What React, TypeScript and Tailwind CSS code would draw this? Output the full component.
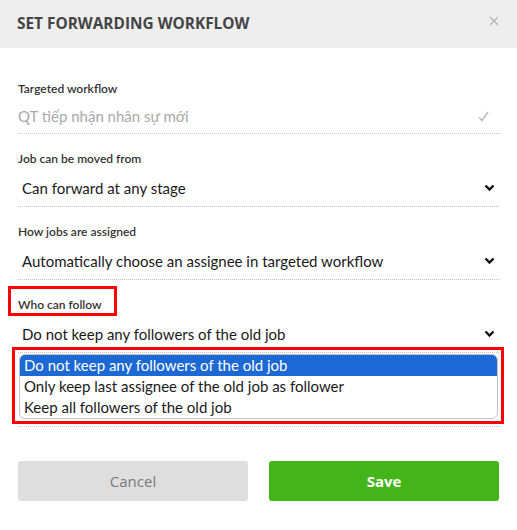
import React from "react";

const Chevron = () => (
  <svg width="11" height="8" viewBox="0 0 11 8" className="shrink-0">
    <polyline points="1.5,1.5 5.5,5.5 9.5,1.5" fill="none" stroke="#111" strokeWidth="2.4" />
  </svg>
);

function SelectField({ label, value, boxed }: { label: string; value: string; boxed?: boolean }) {
  return (
    <div className="pt-[18px]">
      <div className="relative h-[14px] text-[12px] leading-[14px] font-semibold text-[#333]">
        {label}
        {boxed && (
          <div className="absolute left-[-10px] top-[-12px] w-[109px] h-[30px] border-[3px] border-[#ff0000]" />
        )}
      </div>
      <div className="mt-[4px] h-[37px] flex items-center justify-between pl-[4px] pr-[4px] border-b border-dotted border-[#c4c4c4]">
        <span className="text-[15px] text-[#1a1a1a]">{value}</span>
        <Chevron />
      </div>
    </div>
  );
}

export default function App() {
  const options = [
    "Do not keep any followers of the old job",
    "Only keep last assignee of the old job as follower",
    "Keep all followers of the old job",
  ];

  return (
    <div className="w-[517px] h-[530px] bg-white" style={{ fontFamily: "Lato, 'Noto Sans', sans-serif" }}>
      {/* Header */}
      <div className="h-[48px] bg-[#eeeeee] flex items-center justify-between pl-[17px] pr-[18px]">
        <h1
          className="text-[15.4px] font-bold text-[#454545]"
          style={{ fontFamily: "'Open Sans', sans-serif" }}
        >
          SET FORWARDING WORKFLOW
        </h1>
        <svg width="10" height="10" viewBox="0 0 10 10" className="mb-[6px]">
          <path d="M1 1 L9 9 M9 1 L1 9" stroke="#b5b5b5" strokeWidth="1.4" />
        </svg>
      </div>

      {/* Body */}
      <div className="px-[18px] pt-[16px]">
        <div className="pt-[18px]">
          <div className="h-[14px] text-[12px] leading-[14px] font-semibold text-[#333]">Targeted workflow</div>
          <div className="mt-[4px] h-[34px] flex items-center justify-between pr-[10px] border-b border-dotted border-[#c4c4c4]">
            <span className="text-[15px] text-[#a8a8a8]">QT tiếp nhận nhân sự mới</span>
            <svg width="11" height="11" viewBox="0 0 11 11">
              <path d="M1 6.5 L4 9.5 L10 1" fill="none" stroke="#b8b8b8" strokeWidth="1.5" />
            </svg>
          </div>
        </div>

        <SelectField label="Job can be moved from" value="Can forward at any stage" />
        <SelectField label="How jobs are assigned" value="Automatically choose an assignee in targeted workflow" />
        <SelectField label="Who can follow" value="Do not keep any followers of the old job" boxed />

        {/* Open dropdown list */}
        <div className="mt-[-6px] ml-[-6px] mr-[-5px] border-[3px] border-[#ff0000] pl-[4px] pr-[3px] pt-[4px] pb-[2px]">
          <div className="border border-[#c4c4c4] rounded-[6px] overflow-hidden bg-white">
            {options.map((o, i) => (
              <div
                key={o}
                className={`h-[21px] leading-[21px] pl-[4px] text-[15px] ${
                  i === 0 ? "bg-[#1c68d4] text-white" : "text-[#1a1a1a]"
                }`}
              >
                {o}
              </div>
            ))}
          </div>
        </div>
        <div className="mt-[2px] border-b border-dotted border-[#c4c4c4]" />

        {/* Buttons */}
        <div className="mt-[34px] flex gap-[21px]">
          <button className="flex-1 h-[40px] rounded-[3px] bg-[#dedede] text-[15px] text-[#7a7a7a]" style={{ fontFamily: "'Open Sans', sans-serif" }}>
            Cancel
          </button>
          <button className="flex-1 h-[40px] rounded-[3px] bg-[#43b518] text-[15px] font-bold text-white" style={{ fontFamily: "'Open Sans', sans-serif" }}>
            Save
          </button>
        </div>
      </div>
    </div>
  );
}
